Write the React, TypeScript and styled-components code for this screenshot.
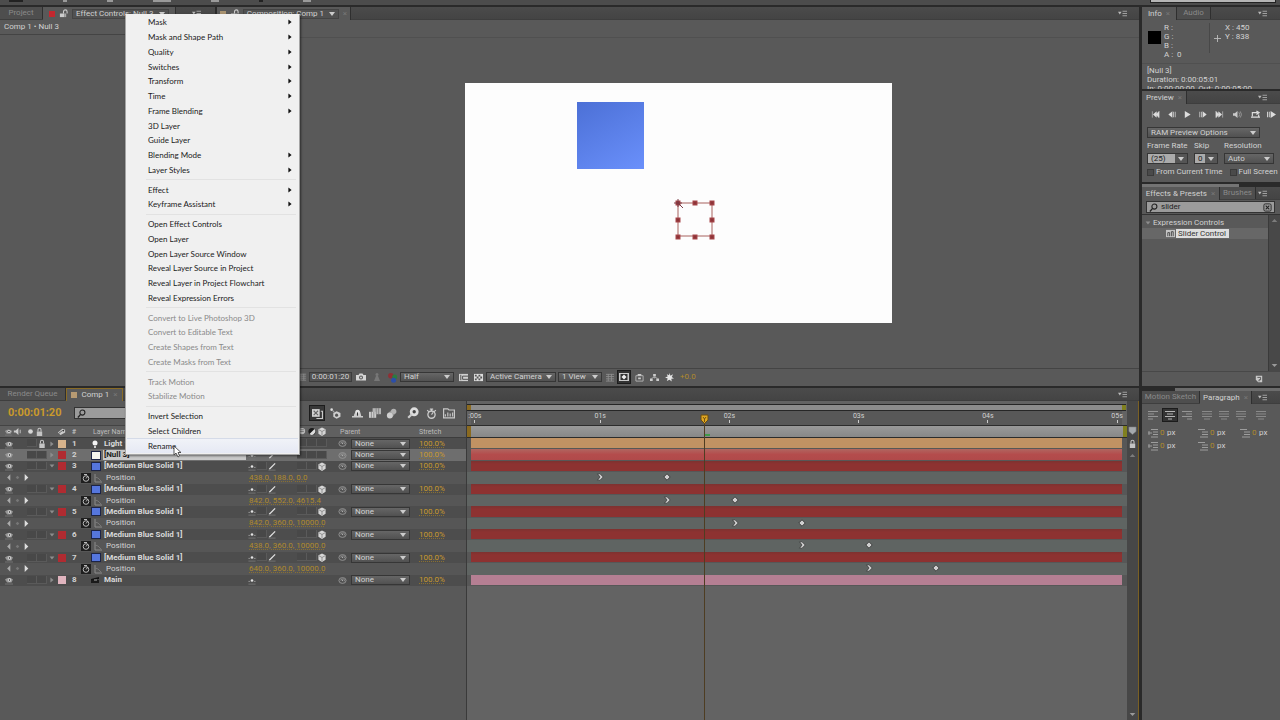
import React from "react";
import styled, { createGlobalStyle, css } from "styled-components";

const c = {
  gap: "#2a2a2a",
  panel: "#595959",
  strip: "#484848",
  line: "#3a3a3a",
  text: "#d2d2d2",
  dim: "#8a8a8a",
  gold: "#c99a2c",
  value: "#b08a2c",
};

const uiFont = `Roboto, "Liberation Sans", sans-serif`;
const menuFont = `Lato, "Open Sans", sans-serif`;

const Global = createGlobalStyle`
  * { box-sizing: border-box; }
  body { margin: 0; background: ${c.gap}; overflow: hidden; }
  button, input, select { font: inherit; color: inherit; margin: 0; padding: 0; border: 0; background: none; border-radius: 0; outline: none; }
  svg { display: block; flex: none; }
`;

/* ---------- icons ---------- */

const shapes: Record<string, React.ReactNode> = {
  lock: <><path d="M1 5h5v4H1z" fill="#ccc" /><path d="M5 5V3a2 2 0 0 1 4 0v2" fill="none" stroke="#ccc" strokeWidth="1.2" /><path d="M6 5h2v4H6z" fill="#aaa" /></>,
  padlock: <><path d="M2 5h6v5H2z" fill="#c4c4c4" /><path d="M3.300 5V3a1.700 1.700 0 0 1 3.400 0v2" fill="none" stroke="#c4c4c4" strokeWidth="1.200" /></>,
  panelMenu: <><path d="M0 3h4L2 6z" fill="#bbb" /><path d="M5 2.500h5M5 5h5M5 7.500h5" stroke="#aaa" /></>,
  search: <><circle cx="6" cy="4" r="2.800" fill="none" stroke="#222" strokeWidth="1.200" /><path d="M4 6L1 9.500" stroke="#222" strokeWidth="1.500" /></>,
  clear: <><rect x="1" y="1" width="8" height="8" rx="1.500" fill="none" stroke="#222" /><path d="M3 3l4 4M7 3L3 7" stroke="#222" strokeWidth="1.200" /></>,
  eye: <><path d="M1 4.500Q5 1 9 4.500L7.500 7.500H3z" fill="#979797" /><circle cx="5.500" cy="5" r="1.700" fill="#ddd" /><circle cx="5.500" cy="5" r=".8" fill="#222" /><path d="M1 9h8" stroke="#747474" /></>,
  speaker: <><path d="M1 4h2l3-3v8L3 6H1z" fill="#ccc" /><path d="M8 3v4" stroke="#ccc" /></>,
  solo: <circle cx="5" cy="5" r="2.600" fill="#d6d6d6" />,
  tag: <><path d="M1 6l5-4 3 1v3L4 9z" fill="#ccc" /><circle cx="7" cy="4" r="1" fill="#333" /><path d="M2 7l4-3" stroke="#555" /></>,
  twirlRight: <path d="M3 2l4 3-4 3z" fill="#8d8d8d" />,
  twirlDown: <path d="M2 3h6L5 7z" fill="#8d8d8d" />,
  bulb: <><circle cx="5" cy="4" r="2.500" fill="#f4f4f4" /><path d="M4 7h2v2H4z" fill="#ccc" /></>,
  comp: <><path d="M1 4l8-2v2L1 6z" fill="#111" /><path d="M1 5h8v3H1z" fill="#1a1a1a" /><path d="M4 5h3" stroke="#aaa" /></>,
  kfPrev: <path d="M7 1.500v7L3.500 5z" fill="#ababab" />,
  kfNext: <path d="M3 1v8L7 5z" fill="#dedede" />,
  kfDot: <path d="M5 3l2 2-2 2-2-2z" fill="#777" />,
  stopwatch: <><rect width="10" height="10" fill="#1f1f1f" /><circle cx="5" cy="5.500" r="2.800" fill="none" stroke="#bbb" /><path d="M3 1.500h3M5 5.500L7 3" stroke="#bbb" /></>,
  graph: <><path d="M2 1v8h7" fill="none" stroke="#8b8b8b" /><path d="M2 4l3 1 3 3" fill="none" stroke="#777" /></>,
  shy: <><circle cx="5" cy="5" r="1.400" fill="#e4e4e4" /><path d="M1 6h2M7 6h2" stroke="#999" /><path d="M1 9h8" stroke="#747474" /></>,
  slash: <><path d="M2 8L8.500 1.500" stroke="#e2e2e2" strokeWidth="1.400" /><path d="M1 9h8" stroke="#747474" /></>,
  cube: <><path d="M5 .500l4 2v5l-4 2.500-4-2.500v-5z" fill="#d6d6d6" /><path d="M1.500 3L5 5l3.500-2M5 5v4" stroke="#777" strokeWidth=".8" fill="none" /></>,
  half: <><circle cx="5" cy="5" r="4" fill="#1c1c1c" /><path d="M7.800 2.200a4 4 0 0 1-5.600 5.600z" fill="#ddd" /></>,
  ball: <><circle cx="5" cy="4.500" r="3.500" fill="#b9b9b9" /><path d="M3 3h4M3 5h4" stroke="#777" /></>,
  whip: <><path d="M1 5a4 3.200 0 1 0 8 0a4 3.200 0 1 0-8 0M3 5a2.200 1.500 0 1 1 3.500 1" fill="none" stroke="#979797" /><circle cx="5" cy="5" r=".8" fill="#aaa" /></>,
  first: <path d="M1.500 1.500v7M9 1.500v7L5.500 5zM6 2v6L2.500 5z" fill="#ddd" stroke="#ddd" strokeWidth=".6" />,
  stepBack: <path d="M6 1.500v7L1.500 5zM7 2h1v6H7zM9 2h.6v6H9z" fill="#ddd" />,
  play: <path d="M2 1l6.500 4L2 9z" fill="#ddd" />,
  stepFwd: <path d="M4 1.500v7L8.500 5zM2 2h1v6H2zM.4 2H1v6H.4z" fill="#ddd" />,
  last: <path d="M8.500 1.500v7M1 1.500v7L4.500 5zM4 2v6L7.500 5z" fill="#ddd" stroke="#ddd" strokeWidth=".6" />,
  audio: <><path d="M0 3.500h2l3-2.500v8L2 6.500H0z" fill="#c9c9c9" /><path d="M6.500 2.500q2 2.500 0 5M8 1.500q3 3.500 0 7" fill="none" stroke="#aaa" strokeWidth=".8" /></>,
  loop: <path d="M0 8h10M1.500 7V3h6M6 1l3 2-3 2M8.500 5v3" fill="none" stroke="#ddd" strokeWidth="1.300" />,
  ram: <><path d="M0 2h1v6H0zM2 2h1v6H2zM4 1l6 4-6 4z" fill="#ddd" /></>,
  camera: <><path d="M0 3h2.500l1-1.500h3l1 1.500H10v5.500H0z" fill="#d5d5d5" /><circle cx="5" cy="5.500" r="2" fill="#555" /><circle cx="5" cy="5.500" r=".9" fill="#ddd" /></>,
  person: <><circle cx="5" cy="2.500" r="1.500" fill="#777" /><path d="M4 4h2l2 5H2z" fill="#777" /></>,
  rgb: <><circle cx="3.500" cy="3.500" r="2.500" fill="#8f2f35" /><circle cx="7" cy="4.500" r="2.300" fill="#2c7a40" /><circle cx="6" cy="7.500" r="2.300" fill="#2c4ea8" /></>,
  region: <><path d="M0 1h10v8H0z" fill="#d0d0d0" /><path d="M10 3.500H4v3.500h6M2 2v6" fill="none" stroke="#444" /></>,
  checker: <><path d="M0 1h10v8H0z" fill="#ddd" /><path d="M1 2h2v2H1zM5 2h2v2H5zM3 4h2v2H3zM7 4h2v2H7zM1 6h2v2H1zM5 6h2v2H5z" fill="#555" /></>,
  grid: <path d="M0 1.500h9M0 4h9M0 6.500h9M0 9h9M2.500 1v8M6 1v8" stroke="#8d8d8d" fill="none" />,
  pixel: <><path d="M0 1h10v8H0z" fill="#c9c9c9" /><path d="M1.500 2h7v6h-7z" fill="#333" /><path d="M5 2.500L7.500 5 5 7.500 2.500 5z" fill="#eee" /></>,
  stack: <><path d="M1 3h8v6H1z" fill="none" stroke="#b5b5b5" /><path d="M3 1h4v2H3zM3.500 5h3v2h-3z" fill="#ccc" /></>,
  flow: <><path d="M3.500 1h3v3h-3zM0 6h3v3H0zM7 6h3v3H7z" fill="#ccc" /><path d="M5 4v2M1.500 6L5 4.500 8.500 6" stroke="#aaa" fill="none" /></>,
  aperture: <path d="M5 0l1 3 3-1.500L7.500 4.500 10 6 7 6.500 7.500 9.500 5 7.500 2 9l1-3L0 5l3-1L2 1.500l2.500 1z" fill="#e6e6e6" />,
  live: <><path d="M0 1h7v7H0z" fill="#d2d2d2" /><path d="M1.500 2.500l4 4M5.500 2.500l-4 4" stroke="#666" /><path d="M8 3h1.500v6.500H4" fill="none" stroke="#c9c9c9" /></>,
  draft: <><circle cx="1.500" cy="1.500" r="1.200" fill="#ddd" /><path d="M6 3l3.500 1.500V8L6 9.800 3 8V4.500z" fill="#cfcfcf" /><circle cx="6" cy="6.500" r="1.400" fill="#555" /><path d="M2 2l2 2" stroke="#aaa" /></>,
  shyBig: <><path d="M0 8h10" stroke="#ddd" strokeWidth="1.200" /><path d="M1.500 8C2 5 3 3 5 2s3 3 3.500 6z" fill="#ccc" /><circle cx="5" cy="3.500" r="2" fill="#e2e2e2" /><path d="M5 4v3" stroke="#333" /></>,
  blend: <><path d="M3 1h7v5H3z" fill="#b4b4b4" /><path d="M0 4h6v5H0z" fill="#cdcdcd" /><path d="M2 4v5M4 4v5M6 1v5M8 1v5" stroke="#777" strokeWidth=".6" /></>,
  blur: <><path d="M1.500 5L6 .8l3.500 3L5 9z" fill="#959595" /><circle cx="3.500" cy="6.800" r="2.700" fill="#cfcfcf" /><circle cx="7" cy="3" r="2.400" fill="#b2b2b2" /></>,
  brain: <><circle cx="6" cy="4" r="3.700" fill="#ddd" /><path d="M4 6L1 9" stroke="#ccc" strokeWidth="1.800" /><circle cx="6" cy="4" r="1.400" fill="#444" /></>,
  clock: <><circle cx="5" cy="6" r="3.300" fill="none" stroke="#ccc" strokeWidth="1.200" /><path d="M3.500 1h3M5 1v2M5 6l1.500-2M1 2l2 1.500M9 2L7 3.500" stroke="#ccc" /></>,
  chart: <><path d="M.5 9V1.500h3.500l1 1h4.500V9z" fill="none" stroke="#c8c8c8" /><path d="M2 8V6M4 8V4.500M6 8V5.500M8 8V4.500" fill="none" stroke="#c2c2c2" /></>,
  newItem: <><path d="M1 1h8v8H4L1 6z" fill="#c9c9c9" /><path d="M3 3h4v3H5v2" stroke="#444" fill="none" /></>,
  preset: <><path d="M0 1h10v8H0z" fill="#c5c5c5" /><path d="M2 8V4h2v4M6 8V3h2v5" stroke="#444" fill="none" /></>,
  left: <path d="M0 1.500h10M0 4h6M0 6.500h10M0 9h5" stroke="#969696" />,
  center: <path d="M0 1.500h10M2 4h6M0 6.500h10M3 9h4" stroke="#b5b5b5" />,
  right: <path d="M0 1.500h10M4 4h6M0 6.500h10M5 9h5" stroke="#969696" />,
  just: <path d="M0 1.500h10M0 4h10M0 6.500h10M2 9h6" stroke="#8a8a8a" />,
  indent: <path d="M3 1.500h7M5 4h5M5 6.500h5M3 9h7M0 5h4M1 3v4" stroke="#9d9d9d" />,
  space: <path d="M0 1.500h7M4 4h6M4 6.500h6M2 9h8" stroke="#9d9d9d" />,
  cross: <path d="M5 0v10M0 5h10" stroke="#bbb" strokeWidth="1.300" />,
  kfOut: <><path d="M2 1h3l4 4-4 4H2l3-4z" fill="#cfcfcf" stroke="#2c2c2c" strokeWidth=".8" /></>,
  kfIn: <><path d="M5 1L9 5 5 9 1 5z" fill="#cfcfcf" stroke="#2c2c2c" /></>,
  up: <path d="M1 7l4-4 4 4z" fill="#7c7c7c" />,
  down: <path d="M1 3l4 4 4-4z" fill="#9a9a9a" />,
  marker: <path d="M1 1h8v5L5 9.500 1 6z" fill="#a5a9ad" stroke="#777" strokeWidth=".6" />,
  arrow: <path d="M3 2l4 3-4 3z" fill="#111" />,
};

const Icon = ({ n, s = 10 }: { n: string; s?: number }) => (
  <svg width={s} height={s} viewBox="0 0 10 10" aria-hidden="true">{shapes[n]}</svg>
);

/* ---------- shared parts ---------- */

const Shell = styled.div`
  display: flex;
  flex-direction: column;
  height: 100vh;
  font: 8px/10px ${uiFont};
  color: ${c.text};
  background: ${c.gap};
`;
const ToolRemnant = styled.header`
  display: flex;
  align-items: flex-start;
  gap: 40px;
  height: 5px;
  margin-bottom: 2px;
  padding-left: 9px;
  background: #4c4c4c;
  overflow: hidden;
`;
const ToolMark = styled.i<{ $w: number; $dark?: boolean }>`
  width: ${(p) => p.$w}px;
  height: 2px;
  background: ${(p) => (p.$dark ? "#222" : "#9a9a9a")};
`;
const HelpSearch = styled.div`
  width: 126px;
  height: 3px;
  margin-left: auto;
  margin-right: 4px;
  background: #b5b5b5;
  border: 1px solid #222;
  border-top: 0;
`;
const Workspace = styled.main`
  flex: 1;
  min-height: 0;
  display: grid;
  grid-template-columns: minmax(0, 1fr) 138px;
  grid-template-rows: minmax(0, 379fr) minmax(0, 332fr);
  gap: 2px 3px;
`;
const Upper = styled.div`
  display: flex;
  gap: 2px;
  min-width: 0;
`;
const Panel = styled.section<{ $w?: number; $grow?: boolean }>`
  display: flex;
  flex-direction: column;
  min-width: 0;
  min-height: 0;
  overflow: hidden;
  background: ${c.panel};
  ${(p) => p.$w && css`flex: 0 0 ${p.$w}px;`}
  ${(p) => p.$grow && css`flex: 1;`}
`;
const Strip = styled.div`
  display: flex;
  flex: none;
  height: 13px;
  background: linear-gradient(#4b4b4b, #444);
  border-bottom: 1px solid #3e3e3e;
`;
const Tab = styled.button<{ $on?: boolean; $w: number; $focus?: boolean }>`
  display: flex;
  align-items: center;
  justify-content: center;
  gap: 4px;
  flex: 0 0 ${(p) => p.$w}px;
  height: ${(p) => (p.$on ? 13 : 12)}px;
  white-space: nowrap;
  border-right: 1px solid #2f2f2f;
  color: ${(p) => (p.$on ? c.text : c.dim)};
  background: ${(p) => (p.$on ? c.panel : "#4e4e4e")};
  ${(p) => p.$focus && css`border: 1px solid #8a6c26; border-bottom: 0;`}
`;
const Close = styled.span`
  color: #777;
`;
const MenuButton = styled.button<{ $r?: number }>`
  display: flex;
  align-items: center;
  margin-left: auto;
  margin-right: ${(p) => p.$r ?? 13}px;
`;
const Swatch = styled.i<{ $c: string; $s: number }>`
  flex: none;
  width: ${(p) => p.$s}px;
  height: ${(p) => p.$s}px;
  background: ${(p) => p.$c};
`;
const Caret = styled.i`
  border: 3px solid transparent;
  border-top: 4px solid #ccc;
  border-bottom: 0;
`;
const SelectBox = styled.span<{ $w?: number; $light?: boolean; $h?: number }>`
  position: relative;
  display: block;
  flex: none;
  height: ${(p) => p.$h ?? 10}px;
  width: ${(p) => (p.$w ? `${p.$w}px` : "auto")};
  background: linear-gradient(#666, #515151);
  border: 1px solid #363636;
  ${(p) => p.$light && css`background: linear-gradient(90deg, #ababab calc(100% - 12px), #555 calc(100% - 12px)); color: #222;`}
  select {
    display: block;
    appearance: none;
    width: 100%;
    height: 100%;
    padding-left: 3px;
    line-height: 8px;
  }
  &::after {
    content: "";
    position: absolute;
    right: 3px;
    top: 50%;
    margin-top: -2px;
    border: 3px solid transparent;
    border-top: 4px solid #ccc;
    border-bottom: 0;
    pointer-events: none;
  }
`;
const Pick = ({ label, value, w, light, h }: { label: string; value: string; w?: number; light?: boolean; h?: number }) => (
  <SelectBox $w={w} $light={light} $h={h}>
    <select aria-label={label} defaultValue={value}><option>{value}</option></select>
  </SelectBox>
);
const IconButton = styled.button<{ $on?: boolean; $w?: number }>`
  display: grid;
  place-items: center;
  flex: 0 0 ${(p) => p.$w ?? 14}px;
  height: 12px;
  ${(p) => p.$on && css`background: #333; outline: 1px solid #1c1c1c;`}
`;

/* ---------- effect controls and composition ---------- */

const Crumb = styled.div`
  height: 15px;
  padding: 2px 4px;
  border-bottom: 1px solid #444;
`;
const CompTitle = styled.span<{ $w: number }>`
  display: flex;
  align-items: center;
  justify-content: space-between;
  width: ${(p) => p.$w}px;
  height: 10px;
  padding: 0 3px;
  background: #515151;
  border: 1px solid #444;
  overflow: hidden;
`;
const CompBar = styled.div`
  height: 18px;
  border-bottom: 1px solid #505050;
`;
const Viewport = styled.div`
  flex: 1;
  display: grid;
  place-items: center;
  min-height: 0;
`;
const Stage = styled.div`
  position: relative;
  width: 427px;
  height: 240px;
  background: #fdfdfd;
`;
const Solid = styled.div`
  position: absolute;
  left: 112px;
  top: 19px;
  width: 67px;
  height: 67px;
  background: linear-gradient(150deg, #4c70d6, #6a90fb);
`;
const NullBox = styled.svg`
  position: absolute;
  left: 207px;
  top: 115px;
`;
const CompFooter = styled.div`
  display: flex;
  align-items: center;
  flex: none;
  gap: 2px;
  height: 18px;
  padding: 1px 0 2px 82px;
  border-top: 1px solid #444;
`;
const TimeBox = styled.button`
  flex: 0 0 43px;
  height: 10px;
  line-height: 8px;
  background: #525252;
  border: 1px solid #3c3c3c;
`;
const Exposure = styled.span`
  margin-left: 2px;
  color: ${c.value};
`;

const EffectControls = () => (
  <Panel $w={215}>
    <Strip>
      <Tab $w={43}>Project</Tab>
      <Tab $w={133} $on>
        <Swatch $c="#c3272f" $s={6} />
        <Icon n="lock" s={9} />
        <CompTitle $w={97}>Effect Controls: Null 3<Caret /></CompTitle>
      </Tab>
      <MenuButton aria-label="Panel menu" $r={14}><Icon n="panelMenu" s={9} /></MenuButton>
    </Strip>
    <Crumb>Comp 1 • Null 3</Crumb>
  </Panel>
);

const handles = [[4, 4], [21, 4], [38, 4], [4, 21], [38, 21], [4, 38], [21, 38], [38, 38]];

const Composition = () => (
  <Panel $grow>
    <Strip>
      <Tab $w={134} $on>
        <Swatch $c="#a99370" $s={6} />
        <Icon n="lock" s={9} />
        <CompTitle $w={96}>Composition: Comp 1<Caret /></CompTitle>
        <Close>×</Close>
      </Tab>
      <MenuButton aria-label="Panel menu" $r={12}><Icon n="panelMenu" s={9} /></MenuButton>
    </Strip>
    <CompBar />
    <Viewport>
      <Stage>
        <Solid />
        <NullBox width="46" height="44" viewBox="0 0 46 44">
          <rect x="6" y="5" width="34" height="33" fill="none" stroke="#a8625f" />
          {handles.map(([x, y]) => <rect key={`${x}-${y}`} x={x} y={y - 1} width="4" height="4" fill="#8d3438" stroke="#a8464a" />)}
          <path d="M2 5h8M6 1v8M7 6l4 4" stroke="#7a3a44" />
        </NullBox>
      </Stage>
    </Viewport>
    <CompFooter>
      <IconButton $w={8} aria-label="Mask visibility"><Icon n="grid" s={8} /></IconButton>
      <TimeBox>0:00:01:20</TimeBox>
      <IconButton aria-label="Take snapshot"><Icon n="camera" /></IconButton>
      <IconButton aria-label="Show snapshot"><Icon n="person" /></IconButton>
      <IconButton $w={12} aria-label="Show channel"><Icon n="rgb" s={11} /></IconButton>
      <Pick label="Resolution" value="Half" w={54} />
      <IconButton aria-label="Region of interest"><Icon n="region" s={9} /></IconButton>
      <IconButton $w={12} aria-label="Transparency grid"><Icon n="checker" s={9} /></IconButton>
      <Pick label="3D view" value="Active Camera" w={70} />
      <Pick label="View layout" value="1 View" w={44} />
      <IconButton $w={12} aria-label="Pixel aspect"><Icon n="grid" s={9} /></IconButton>
      <IconButton $w={12} $on aria-label="Fast previews"><Icon n="pixel" /></IconButton>
      <IconButton aria-label="Timeline"><Icon n="stack" s={9} /></IconButton>
      <IconButton $w={12} aria-label="Flowchart"><Icon n="flow" s={9} /></IconButton>
      <IconButton aria-label="Reset exposure"><Icon n="aperture" s={9} /></IconButton>
      <Exposure>+0.0</Exposure>
    </CompFooter>
  </Panel>
);

/* ---------- right column ---------- */

const Side = styled.div`
  display: flex;
  flex-direction: column;
  gap: 2px;
  min-height: 0;
`;
const InfoBody = styled.div`
  display: grid;
  grid-template-columns: 16px 45px 1fr;
  height: 40px;
  margin-top: 3px;
  padding-left: 6px;
  line-height: 9px;
`;
const BlackChip = styled.i`
  width: 13px;
  height: 13px;
  margin-top: 8px;
  background: #000;
`;
const Coords = styled.div`
  display: grid;
  grid-template-columns: 15px 1fr;
  height: 30px;
  border-left: 1px solid #484848;
  svg { margin: 12px 0 0 4px; }
`;
const Lines = styled.div`
  white-space: pre;
`;
const InfoText = styled.p`
  margin: 0;
  padding: 2px 5px 0;
  height: 26px;
  border-top: 1px solid #505050;
  line-height: 9px;
  white-space: nowrap;
  overflow: hidden;
`;
const PreviewBody = styled.div`
  display: flex;
  flex-direction: column;
  padding: 0 4px 5px 5px;
`;
const Transport = styled.div`
  display: flex;
  height: 20px;
  align-items: center;
  margin-bottom: 3px;
`;
const Fields = styled.div`
  display: grid;
  grid-template-columns: 41px 24px 50px;
  column-gap: 6px;
  margin-top: 4px;
  label { display: block; height: 10px; margin-bottom: 1px; line-height: 8px; white-space: nowrap; }
`;
const Checks = styled.div`
  display: flex;
  gap: 7px;
  margin-top: 3px;
  label { display: flex; align-items: center; gap: 2px; white-space: nowrap; }
  input { appearance: none; width: 7px; height: 7px; background: #4a4a4a; border: 1px solid #3a3a3a; }
`;
const Slider = styled.div<{ $from: string; $to: string; $at: number }>`
  flex: none;
  height: 3px;
  background: linear-gradient(90deg, ${(p) => p.$from} ${(p) => p.$at}%, ${(p) => p.$to} ${(p) => p.$at}%);
`;
const Search = styled.label<{ $m?: string }>`
  display: flex;
  align-items: center;
  gap: 3px;
  flex: none;
  height: 12px;
  margin: ${(p) => p.$m ?? "1px 5px 1px 4px"};
  padding: 0 2px;
  background: #9b9b9b;
  border: 1px solid #333;
  color: #222;
  input { flex: 1; width: 20px; line-height: 10px; }
`;
const ListArea = styled.div`
  flex: 1;
  display: flex;
  min-height: 0;
  border-top: 1px solid #333;
`;
const List = styled.div`
  flex: 1;
  min-width: 0;
  padding-top: 2px;
`;
const ListRow = styled.div<{ $on?: boolean }>`
  display: flex;
  align-items: center;
  gap: 1px;
  height: 11px;
  padding-left: ${(p) => (p.$on ? 24 : 2)}px;
  background: ${(p) => (p.$on ? "#676767" : "none")};
`;
const Chosen = styled.span`
  padding: 0 3px 0 2px;
  line-height: 9px;
  color: #333;
  background: #dedede;
`;
const Scroll = styled.div<{ $w: number }>`
  display: flex;
  flex-direction: column;
  justify-content: space-between;
  align-items: center;
  flex: 0 0 ${(p) => p.$w}px;
  padding: 2px 0;
  background: #484848;
  border-left: 1px solid #3a3a3a;
`;
const EffectsFooter = styled.div`
  display: flex;
  align-items: center;
  justify-content: flex-end;
  height: 15px;
  padding-right: 17px;
  border-top: 1px solid #484848;
`;
const Aligns = styled.div`
  display: flex;
  gap: 3px;
  padding: 5px 0 0 4px;
`;
const AlignGap = styled.i`
  width: 0;
`;
const Indents = styled.div`
  display: grid;
  grid-template-columns: 50px 42px 40px;
  row-gap: 3px;
  padding: 7px 0 0 6px;
`;
const Indent = styled.label`
  display: flex;
  align-items: center;
  gap: 2px;
  input { width: 5px; color: ${c.value}; line-height: 10px; }
`;

const IndentField = ({ n, label }: { n: string; label: string }) => (
  <Indent><Icon n={n} s={10} /><input aria-label={label} defaultValue="0" />px</Indent>
);

const SideTop = () => (
  <Side>
    <Panel>
      <Strip>
        <Tab $w={35} $on>Info <Close>×</Close></Tab>
        <Tab $w={34}>Audio</Tab>
        <MenuButton aria-label="Panel menu"><Icon n="panelMenu" s={9} /></MenuButton>
      </Strip>
      <InfoBody>
        <BlackChip />
        <Lines>{"R :\nG :\nB :\nA :  0"}</Lines>
        <Coords><Icon n="cross" s={7} /><Lines>{"X : 450\nY : 838"}</Lines></Coords>
      </InfoBody>
      <InfoText>[Null 3]<br />Duration: 0:00:05:01<br />In: 0:00:00:00, Out: 0:00:05:00</InfoText>
    </Panel>
    <Panel>
      <Strip>
        <Tab $w={45} $on>Preview <Close>×</Close></Tab>
        <MenuButton aria-label="Panel menu"><Icon n="panelMenu" s={9} /></MenuButton>
      </Strip>
      <PreviewBody>
        <Transport>
          {["first", "stepBack", "play", "stepFwd", "last", "audio", "loop", "ram"].map((n) => (
            <IconButton key={n} $w={n === "audio" ? 20 : 16} aria-label={n}><Icon n={n} s={9} /></IconButton>
          ))}
        </Transport>
        <Pick label="Preview options" value="RAM Preview Options" w={113} h={11} />
        <Fields>
          <div><label>Frame Rate</label><Pick label="Frame Rate" value="(25)" light h={11} /></div>
          <div><label>Skip</label><Pick label="Skip" value="0" light h={11} /></div>
          <div><label>Resolution</label><Pick label="Resolution" value="Auto" h={11} /></div>
        </Fields>
        <Checks>
          <label><input type="checkbox" />From Current Time</label>
          <label><input type="checkbox" />Full Screen</label>
        </Checks>
      </PreviewBody>
    </Panel>
    <Panel $grow>
      <Slider $from="#747474" $to="#2a2a2a" $at={70} />
      <Strip>
        <Tab $w={78} $on>Effects & Presets <Close>×</Close></Tab>
        <Tab $w={36}>Brushes</Tab>
        <MenuButton aria-label="Panel menu"><Icon n="panelMenu" s={9} /></MenuButton>
      </Strip>
      <Search>
        <Icon n="search" s={9} />
        <input aria-label="Search effects" defaultValue="slider" />
        <Icon n="clear" s={9} />
      </Search>
      <ListArea>
        <List>
          <ListRow><Icon n="twirlDown" s={8} />Expression Controls</ListRow>
          <ListRow $on><Icon n="preset" s={9} /><Chosen>Slider Control</Chosen></ListRow>
        </List>
        <Scroll $w={12}><Icon n="up" s={7} /><Icon n="down" s={7} /></Scroll>
      </ListArea>
      <EffectsFooter><Icon n="newItem" s={8} /></EffectsFooter>
    </Panel>
  </Side>
);

const SideBottom = () => (
  <Panel>
    <Slider $from="#2a2a2a" $to="#6c6c6c" $at={24} />
    <Strip>
      <Tab $w={58}>Motion Sketch</Tab>
      <Tab $w={52} $on>Paragraph <Close>×</Close></Tab>
      <MenuButton aria-label="Panel menu"><Icon n="panelMenu" s={9} /></MenuButton>
    </Strip>
    <Aligns>
      <IconButton aria-label="Left align"><Icon n="left" /></IconButton>
      <IconButton $on aria-label="Center"><Icon n="center" /></IconButton>
      <IconButton aria-label="Right align"><Icon n="right" /></IconButton>
      <AlignGap />
      <IconButton aria-label="Justify last left"><Icon n="just" /></IconButton>
      <IconButton aria-label="Justify last centered"><Icon n="just" /></IconButton>
      <IconButton aria-label="Justify last right"><Icon n="just" /></IconButton>
      <AlignGap />
      <IconButton aria-label="Justify all"><Icon n="just" /></IconButton>
    </Aligns>
    <Indents>
      <IndentField n="indent" label="Indent left" />
      <IndentField n="space" label="Space before" />
      <IndentField n="space" label="Indent first line" />
      <IndentField n="indent" label="Indent right" />
      <IndentField n="space" label="Space after" />
    </Indents>
  </Panel>
);

/* ---------- timeline ---------- */

const Body = styled.div`
  flex: 1;
  display: flex;
  min-height: 0;
  border-right: 1px solid #7a6024;
`;
const Outline = styled.div`
  flex: 0 0 466px;
  background: ${c.panel};
`;
const Controls = styled.div`
  display: flex;
  align-items: center;
  height: 24px;
  padding-left: 8px;
`;
const TimeCode = styled.button`
  width: 66px;
  text-align: left;
  font-size: 11px;
  font-weight: 700;
  color: ${c.gold};
`;
const SearchWrap = styled.div`
  width: 235px;
`;
const ControlSlot = styled.button<{ $w: number; $on?: boolean }>`
  display: grid;
  place-items: center;
  flex: 0 0 ${(p) => p.$w}px;
  height: 16px;
  ${(p) => p.$on && css`background: #383838; outline: 1px solid #1c1c1c; outline-offset: -1px;`}
`;
const rowGrid = css`
  display: grid;
  grid-template-columns: 22px 26px 9px 12px 17px 17px 143px 88px 80px 52px;
  align-items: center;
`;
const Heads = styled.div`
  ${rowGrid}
  height: 13px;
  background: #606060;
  border-top: 1px solid #444;
  border-bottom: 1px solid #3d3d3d;
  color: #bbb;
  font-size: 7px;
`;
const HeadName = styled.span`
  grid-column: span 2;
  padding-left: 7px;
`;
const Pair = styled.span`
  display: flex;
  padding-left: 4px;
`;
const LabelCell = styled.span`
  padding-left: 1px;
`;
const Rows = styled.div`
  display: grid;
  grid-template-rows: repeat(13, minmax(0, 1fr));
  height: 148px;
`;
const LayerRow = styled.div<{ $on?: boolean }>`
  ${rowGrid}
  background: ${(p) => (p.$on ? "#6e6e6e" : "#4d4d4d")};
`;
const Name = styled.span<{ $on?: boolean }>`
  padding-left: 1px;
  font-weight: 700;
  line-height: 10px;
  white-space: nowrap;
  color: ${(p) => (p.$on ? "#222" : "#dadada")};
  background: ${(p) => (p.$on ? "#c9c9c9" : "none")};
`;
const Num = styled.b`
  padding-left: 3px;
`;
const Slots = styled.span`
  display: flex;
  padding-left: 1px;
  > * { flex: 0 0 10px; }
`;
const Slot = styled.i`
  height: 8px;
  background: #484848;
  border: solid #5a5a5a;
  border-width: 0 1px 1px 0;
`;
const Blank = styled.i``;
const ParentCell = styled.span`
  display: flex;
  align-items: center;
  gap: 4px;
  padding-left: 4px;
`;
const HeadParent = styled.span`
  padding-left: 6px;
`;
const HotText = styled.span`
  color: ${c.gold};
  text-decoration: underline dotted 1px #8a7030;
  text-underline-offset: 1px;
`;
const StretchCell = styled.span`
  padding-left: 5px;
`;
const PropRow = styled.div`
  display: grid;
  grid-template-columns: 81px 12px 13px 143px 1fr;
  align-items: center;
  background: #565656;
`;
const KeyNav = styled.span`
  display: flex;
  padding-left: 4px;
`;
const Value = styled(HotText)`
  color: ${c.value};
`;

const Graph = styled.div`
  position: relative;
  flex: 1;
  min-width: 0;
  background: #636363;
  border-left: 1px solid #3a3a3a;
`;
const Navigator = styled.div`
  height: 7px;
  margin-top: 3px;
  margin-right: 1px;
  background: #8c8c8c;
  border: solid #262626;
  border-width: 1px 0;
  box-shadow: inset 4px 0 #8a6a20, inset -4px 0 #80801f;
`;
const Ruler = styled.div`
  position: relative;
  height: 14px;
  margin: 0 5px 0 4px;
  background: #585858;
`;
const Tick = styled.span`
  position: absolute;
  top: 1px;
  width: 20px;
  margin-left: -10px;
  text-align: center;
  line-height: 8px;
  font-size: 7px;
  &::after { content: ""; display: block; width: 1px; height: 3px; margin: 0 auto; background: #ccc; }
`;
const WorkArea = styled.div`
  height: 13px;
  background: linear-gradient(#999, #888);
  border: solid #2c2c2c;
  border-width: 1px 0;
  box-shadow: inset 4px 0 #8a6a20, inset -4px 0 #80801f;
`;
const Track = styled.div<{ $prop?: boolean }>`
  padding: 0 5px 1px 4px;
  background: ${(p) => (p.$prop ? "#5f6462" : "#575757")};
`;
const Bar = styled.div<{ $c: string }>`
  height: 100%;
  background: ${(p) => p.$c};
`;
const KeyLane = styled.div`
  position: relative;
  height: 100%;
`;
const Key = styled.span`
  position: absolute;
  top: 1px;
  margin-left: -4px;
`;
const HeadLane = styled.div`
  position: absolute;
  inset: 13px 5px 0 4px;
  pointer-events: none;
`;
const Playhead = styled.div`
  position: absolute;
  top: 0;
  bottom: 0;
  width: 9px;
  margin-left: -4px;
  background: linear-gradient(#4e3d22 0 0) 4px 8px / 1px 100% no-repeat;
`;
const CacheMark = styled.i`
  position: absolute;
  top: 20px;
  left: 5px;
  width: 5px;
  height: 2px;
  background: #3f9a4a;
`;
const GraphScroll = styled.div`
  display: flex;
  flex-direction: column;
  align-items: center;
  flex: 0 0 11px;
  padding: 25px 0 2px;
  gap: 4px;
  background: #474747;
  > :last-child { margin-top: auto; }
`;

type Layer = { id: number; name: string; kind: "light" | "null" | "solid" | "main"; label: string; bar: string; value?: string; keys?: [number, number] };

const red = "#b02b31";
const solidBar = "linear-gradient(#7d3230, #8d3231 30%)";
const layers: Layer[] = [
  { id: 1, name: "Light 1", kind: "light", label: "#d8b48c", bar: "#c19263" },
  { id: 2, name: "[Null 3]", kind: "null", label: red, bar: "linear-gradient(#b06660, #b44c4c 50%, #b04a4a)" },
  { id: 3, name: "[Medium Blue Solid 1]", kind: "solid", label: red, bar: solidBar, value: "438.0, 188.0, 0.0", keys: [1, 1.52] },
  { id: 4, name: "[Medium Blue Solid 1]", kind: "solid", label: red, bar: solidBar, value: "842.0, 552.0, 4615.4", keys: [1.52, 2.04] },
  { id: 5, name: "[Medium Blue Solid 1]", kind: "solid", label: red, bar: solidBar, value: "842.0, 360.0, 10000.0", keys: [2.04, 2.56] },
  { id: 6, name: "[Medium Blue Solid 1]", kind: "solid", label: red, bar: solidBar, value: "438.0, 360.0, 10000.0", keys: [2.56, 3.08] },
  { id: 7, name: "[Medium Blue Solid 1]", kind: "solid", label: red, bar: solidBar, value: "640.0, 360.0, 10000.0", keys: [3.08, 3.6] },
  { id: 8, name: "Main", kind: "main", label: "#e0b4be", bar: "#b57f93" },
];
const at = (s: number) => `${(s * 19.85).toFixed(2)}%`;

const SourceChip = styled.i<{ $c: string }>`
  width: 10px;
  height: 9px;
  margin-left: 1px;
  background: ${(p) => p.$c};
  border: 1px solid #1c2447;
`;
const SourceIcon = ({ kind }: { kind: Layer["kind"] }) => (
  <Pair>
    {kind === "light" ? <Icon n="bulb" /> : kind === "main" ? <Icon n="comp" /> : <SourceChip $c={kind === "null" ? "#f4f4ee" : "#5576dd"} />}
  </Pair>
);

const OutlineRow = ({ l }: { l: Layer }) => (
  <>
    <LayerRow $on={l.kind === "null"}>
      <Pair><Icon n="eye" /></Pair>
      <Pair><Slots><Slot />{l.kind === "light" ? <Icon n="padlock" s={9} /> : <Slot />}</Slots></Pair>
      <Icon n={l.value ? "twirlDown" : "twirlRight"} s={8} />
      <LabelCell><Swatch as="span" style={{ display: "block" }} $c={l.label} $s={8} /></LabelCell>
      <Num>{l.id}</Num>
      <SourceIcon kind={l.kind} />
      <Name $on={l.kind === "null"}>{l.name}</Name>
      <Slots>
        <Icon n="shy" s={9} />
        {l.kind === "solid" ? (
          <><Slot /><Icon n="slash" s={9} /><Blank /><Blank /><Slot /><Slot /><Icon n="cube" s={9} /></>
        ) : l.kind === "main" ? null : (
          <><Blank /><Icon n="slash" s={9} /><Blank /><Blank /><Slot /><Slot /><Slot /></>
        )}
      </Slots>
      <ParentCell><Icon n="whip" s={9} /><Pick label={`Parent of layer ${l.id}`} value="None" w={59} /></ParentCell>
      <StretchCell><HotText>100.0%</HotText></StretchCell>
    </LayerRow>
    {l.value && (
      <PropRow>
        <KeyNav><Icon n="kfPrev" s={9} /><Icon n="kfDot" s={9} /><Icon n="kfNext" s={9} /></KeyNav>
        <Icon n="stopwatch" />
        <Icon n="graph" />
        <span>Position</span>
        <Value>{l.value}</Value>
      </PropRow>
    )}
  </>
);

const Timeline = () => (
  <Panel>
    <Strip>
      <Tab $w={66}>Render Queue</Tab>
      <Tab $w={57} $on $focus><Swatch $c="#b79a72" $s={6} />Comp 1 <Close>×</Close></Tab>
      <MenuButton aria-label="Panel menu" $r={12}><Icon n="panelMenu" s={9} /></MenuButton>
    </Strip>
    <Body>
      <Outline>
        <Controls>
          <TimeCode>0:00:01:20</TimeCode>
          <SearchWrap>
            <Search $m="0 60px 0 0"><Icon n="search" s={9} /><input aria-label="Search layers" /></Search>
          </SearchWrap>
          <ControlSlot $w={16} $on aria-label="Live update"><Icon n="live" s={11} /></ControlSlot>
          <ControlSlot $w={20} aria-label="Draft 3D"><Icon n="draft" s={11} /></ControlSlot>
          <ControlSlot $w={24} aria-label="Hide shy layers"><Icon n="shyBig" s={11} /></ControlSlot>
          <ControlSlot $w={12} aria-label="Frame blending"><Icon n="blend" s={12} /></ControlSlot>
          <ControlSlot $w={20} aria-label="Motion blur"><Icon n="blur" s={11} /></ControlSlot>
          <ControlSlot $w={24} aria-label="Brainstorm"><Icon n="brain" s={12} /></ControlSlot>
          <ControlSlot $w={12} aria-label="Auto-keyframe"><Icon n="clock" s={11} /></ControlSlot>
          <ControlSlot $w={24} aria-label="Graph editor"><Icon n="chart" s={12} /></ControlSlot>
        </Controls>
        <Heads>
          <Pair><Icon n="eye" s={9} /><Icon n="speaker" s={9} /></Pair>
          <Pair><Icon n="solo" s={9} /><Icon n="padlock" s={9} /></Pair>
          <span />
          <Icon n="tag" s={9} />
          <Num>#</Num>
          <HeadName>Layer Name</HeadName>
          <Slots><Blank /><Blank /><Blank /><Blank /><Blank /><Icon n="ball" s={9} /><Icon n="half" s={9} /><Icon n="cube" s={9} /></Slots>
          <HeadParent>Parent</HeadParent>
          <StretchCell>Stretch</StretchCell>
        </Heads>
        <Rows>{layers.map((l) => <OutlineRow key={l.id} l={l} />)}</Rows>
      </Outline>
      <Graph>
        <Navigator />
        <Ruler>
          <Tick style={{ left: at(0.03) }}>:00s</Tick>
          {[1, 2, 3, 4, 5].map((s) => <Tick key={s} style={{ left: at(s) }}>{`0${s}s`}</Tick>)}
        </Ruler>
        <WorkArea />
        <Rows>
          {layers.map((l) => (
            <React.Fragment key={l.id}>
              <Track><Bar $c={l.bar} /></Track>
              {l.keys && (
                <Track $prop>
                  <KeyLane>
                    <Key style={{ left: at(l.keys[0]) }}><Icon n="kfOut" s={8} /></Key>
                    <Key style={{ left: at(l.keys[1]) }}><Icon n="kfIn" s={8} /></Key>
                  </KeyLane>
                </Track>
              )}
            </React.Fragment>
          ))}
        </Rows>
        <HeadLane>
          <Playhead style={{ left: at(1.8) }}>
            <svg width="9" height="10" viewBox="0 0 9 10"><path d="M1 1h7v5L4.500 9.500 1 6z" fill="#e0a722" stroke="#6b4d10" /><path d="M3 3l1.500 2L6 3M4.500 5v3" fill="none" stroke="#5b400c" strokeWidth=".8" /></svg>
            <CacheMark />
          </Playhead>
        </HeadLane>
      </Graph>
      <GraphScroll><Icon n="marker" s={9} /><Icon n="padlock" s={9} /><Icon n="up" s={7} /><Icon n="down" s={7} /></GraphScroll>
    </Body>
  </Panel>
);

/* ---------- context menu ---------- */

const Menu = styled.div`
  position: absolute;
  left: 125px;
  top: 14px;
  display: flex;
  flex-direction: column;
  width: 175px;
  height: 441px;
  padding-bottom: 1px;
  color: #1a1a1a;
  font: 8px/14px ${menuFont};
  background: #f0f0f0;
  border: 1px solid #a5a5a5;
  border-top-color: #f0f0f0;
  box-shadow: 1px 1px 2px rgba(0, 0, 0, 0.5);
`;
const Item = styled.button<{ $off?: boolean; $hot?: boolean }>`
  display: flex;
  align-items: center;
  justify-content: space-between;
  flex: 1;
  min-height: 0;
  margin: 0 1px;
  padding: 0 4px 0 21px;
  text-align: left;
  white-space: nowrap;
  color: ${(p) => (p.$off ? "#8a8a8a" : "inherit")};
  ${(p) => p.$hot && css`background: linear-gradient(#f1f3f8, #e6e9f4); box-shadow: inset 0 1px #d5dbe8;`}
`;
const Rule = styled.hr`
  flex: none;
  width: 150px;
  height: 1px;
  margin: 2px 2px 2px 20px;
  border: 0;
  background: #e2e2e2;
`;
const Cursor = styled.svg`
  position: absolute;
  left: 173px;
  top: 445px;
`;

const groups: string[][] = [
  ["Mask>", "Mask and Shape Path>", "Quality>", "Switches>", "Transform>", "Time>", "Frame Blending>", "3D Layer", "Guide Layer", "Blending Mode>", "Layer Styles>"],
  ["Effect>", "Keyframe Assistant>"],
  ["Open Effect Controls", "Open Layer", "Open Layer Source Window", "Reveal Layer Source in Project", "Reveal Layer in Project Flowchart", "Reveal Expression Errors"],
  ["Convert to Live Photoshop 3D", "Convert to Editable Text", "Create Shapes from Text", "Create Masks from Text"],
  ["Track Motion", "Stabilize Motion"],
  ["Invert Selection", "Select Children", "Rename"],
];

const ContextMenu = () => (
  <Menu role="menu">
    {groups.map((g, i) => (
      <React.Fragment key={i}>
        {i > 0 && <Rule />}
        {g.map((t) => (
          <Item key={t} role="menuitem" $off={i === 3 || i === 4} $hot={t === "Rename"}>
            {t.replace(">", "")}
            {t.endsWith(">") && <Icon n="arrow" s={8} />}
          </Item>
        ))}
      </React.Fragment>
    ))}
  </Menu>
);

export default function App() {
  return (
    <Shell>
      <Global />
      <ToolRemnant>
        <ToolMark $w={14} $dark /><ToolMark $w={4} /><ToolMark $w={6} /><ToolMark $w={18} /><ToolMark $w={8} /><ToolMark $w={4} $dark /><ToolMark $w={8} />
        <HelpSearch />
      </ToolRemnant>
      <Workspace>
        <Upper>
          <EffectControls />
          <Composition />
        </Upper>
        <SideTop />
        <Timeline />
        <SideBottom />
      </Workspace>
      <ContextMenu />
      <Cursor width="9" height="13" viewBox="0 0 9 13"><path d="M1 1v9l2-2 2 4 1.500-1L5 7.500h3z" fill="#fff" stroke="#333" strokeWidth=".8" /></Cursor>
    </Shell>
  );
}
